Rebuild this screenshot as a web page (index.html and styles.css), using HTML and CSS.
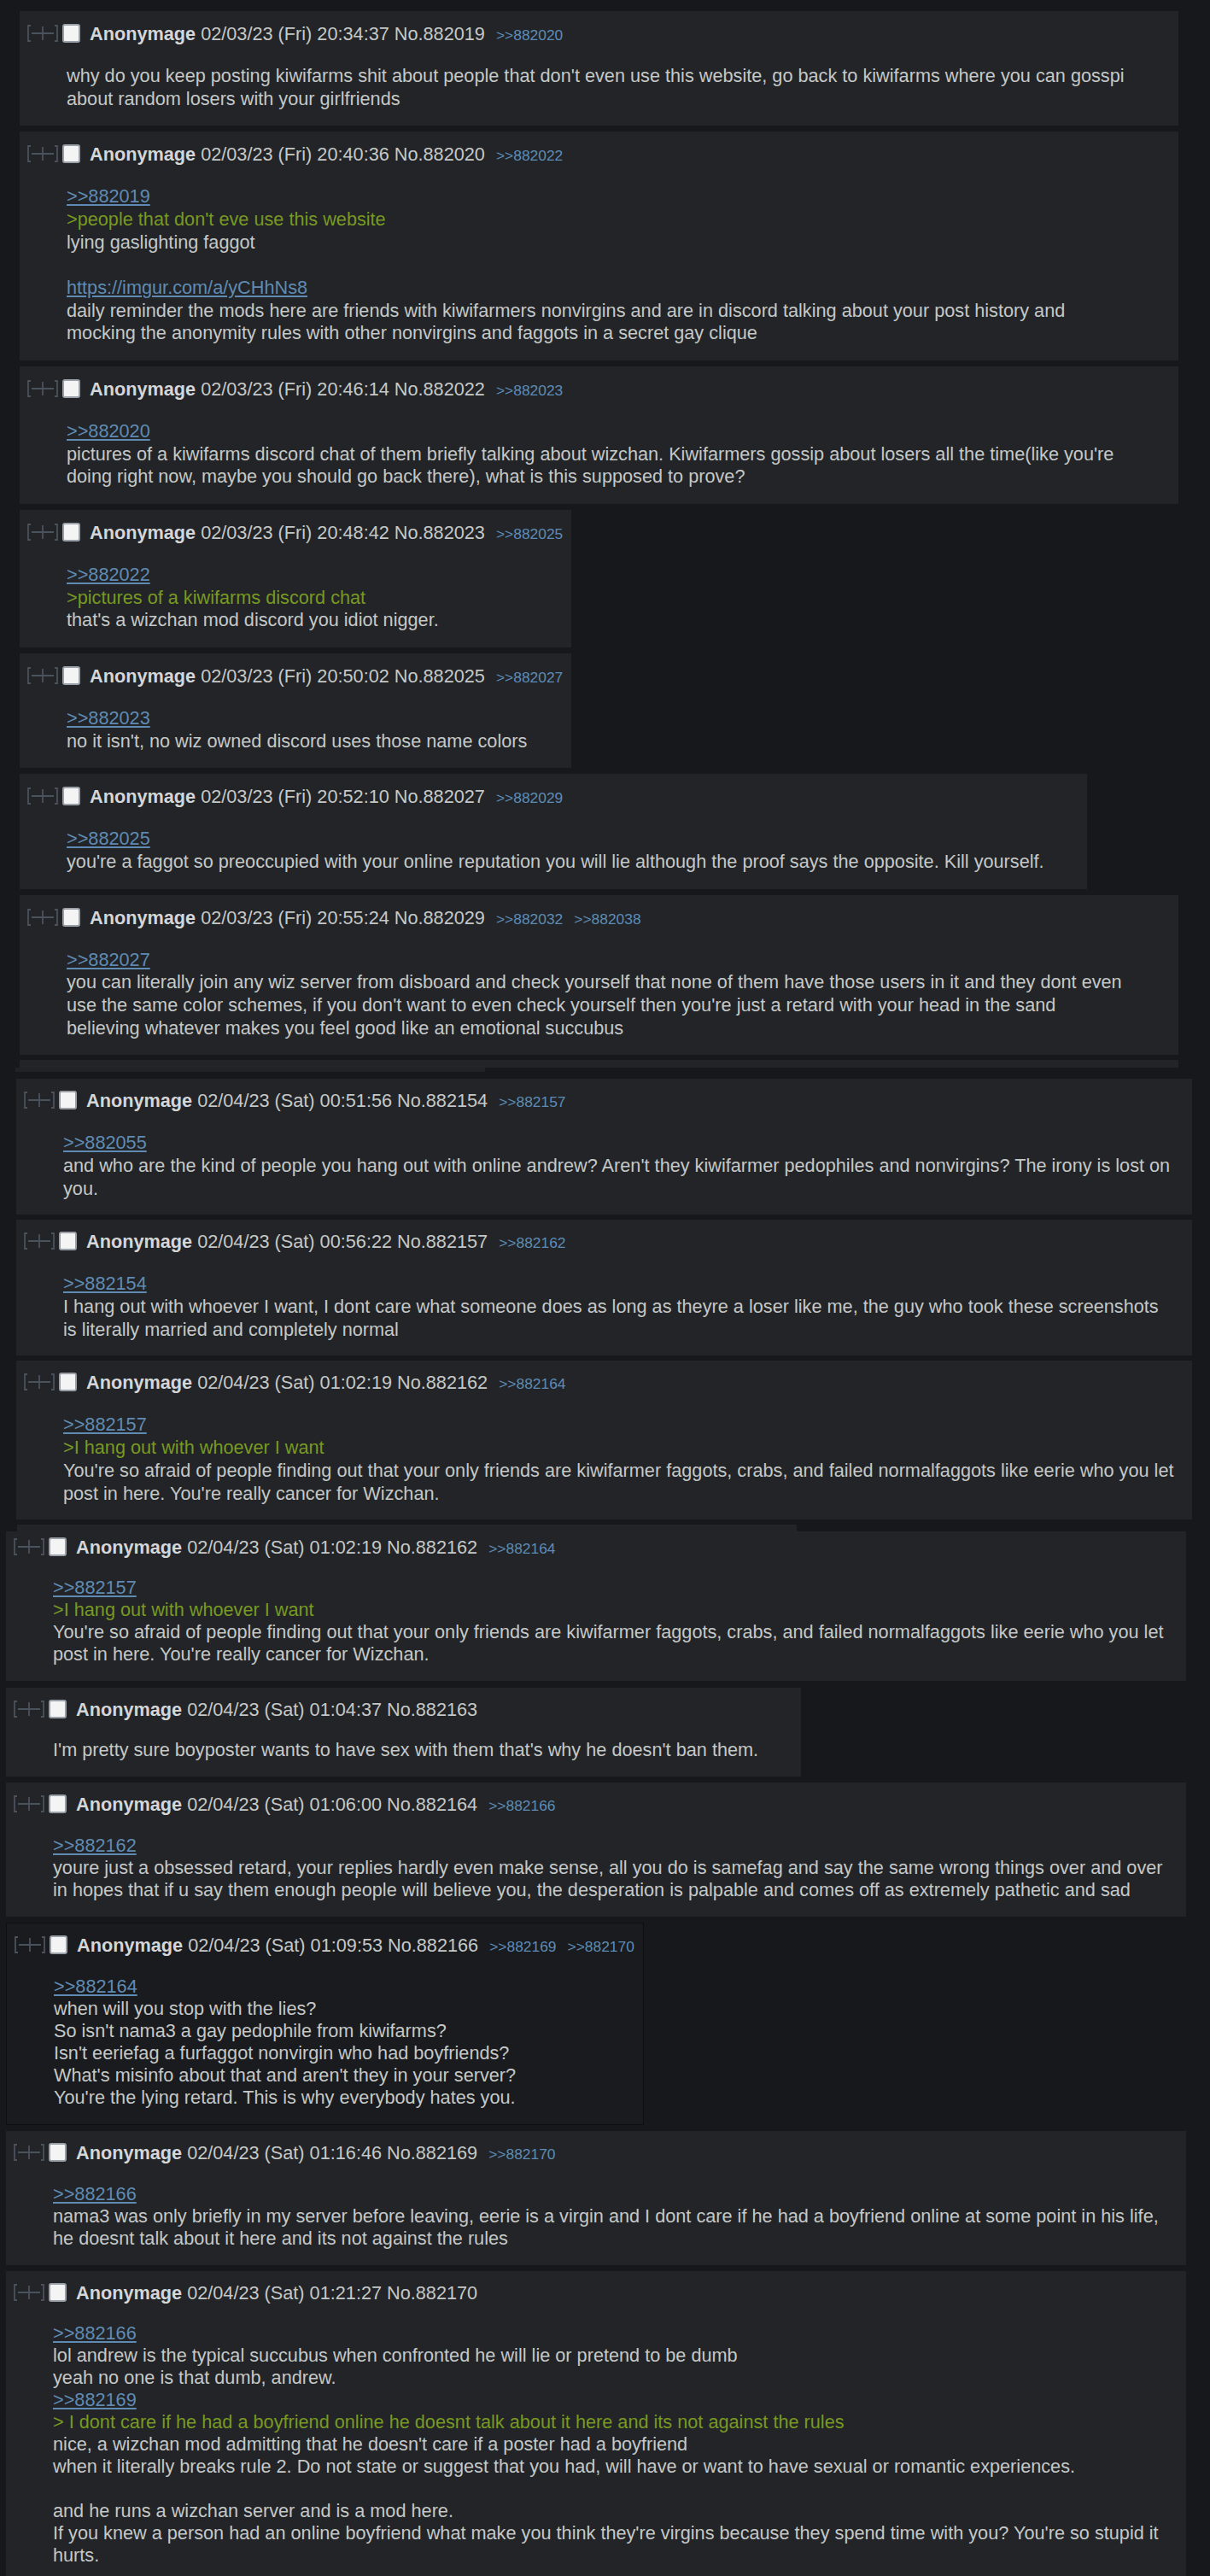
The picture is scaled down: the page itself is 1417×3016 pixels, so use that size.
FILE: index.html
```html
<!DOCTYPE html>
<html lang="en">
<head>
<meta charset="utf-8">
<title>Thread</title>
<link rel="stylesheet" href="styles.css">
</head>
<body>
<div class="page">

<div class="sec sec1">
  <div class="post full">
    <div class="hdr"><svg class="exp" viewBox="0 0 38 22"><path d="M5 2H2V20H5M33 2H36V20H33M6 11H32M19 3V19"/></svg><span class="cb"></span><span class="name">Anonymage</span> 02/03/23 (Fri) 20:34:37 No.882019<span class="backs"><a href="#p882020">&gt;&gt;882020</a></span></div>
    <blockquote class="msg">why do you keep posting kiwifarms shit about people that don't even use this website, go back to kiwifarms where you can gosspi<br>about random losers with your girlfriends</blockquote>
  </div>

  <div class="post full">
    <div class="hdr"><svg class="exp" viewBox="0 0 38 22"><path d="M5 2H2V20H5M33 2H36V20H33M6 11H32M19 3V19"/></svg><span class="cb"></span><span class="name">Anonymage</span> 02/03/23 (Fri) 20:40:36 No.882020<span class="backs"><a href="#p882022">&gt;&gt;882022</a></span></div>
    <blockquote class="msg"><a class="ql" href="#p882019">&gt;&gt;882019</a><br><span class="gt">&gt;people that don't eve use this website</span><br>lying gaslighting faggot<br><br><a class="ql" href="#imgur">https://imgur.com/a/yCHhNs8</a><br>daily reminder the mods here are friends with kiwifarmers nonvirgins and are in discord talking about your post history and<br>mocking the anonymity rules with other nonvirgins and faggots in a secret gay clique</blockquote>
  </div>

  <div class="post full">
    <div class="hdr"><svg class="exp" viewBox="0 0 38 22"><path d="M5 2H2V20H5M33 2H36V20H33M6 11H32M19 3V19"/></svg><span class="cb"></span><span class="name">Anonymage</span> 02/03/23 (Fri) 20:46:14 No.882022<span class="backs"><a href="#p882023">&gt;&gt;882023</a></span></div>
    <blockquote class="msg"><a class="ql" href="#p882020">&gt;&gt;882020</a><br>pictures of a kiwifarms discord chat of them briefly talking about wizchan. Kiwifarmers gossip about losers all the time(like you're<br>doing right now, maybe you should go back there), what is this supposed to prove?</blockquote>
  </div>

  <div class="post">
    <div class="hdr"><svg class="exp" viewBox="0 0 38 22"><path d="M5 2H2V20H5M33 2H36V20H33M6 11H32M19 3V19"/></svg><span class="cb"></span><span class="name">Anonymage</span> 02/03/23 (Fri) 20:48:42 No.882023<span class="backs"><a href="#p882025">&gt;&gt;882025</a></span></div>
    <blockquote class="msg"><a class="ql" href="#p882022">&gt;&gt;882022</a><br><span class="gt">&gt;pictures of a kiwifarms discord chat</span><br>that's a wizchan mod discord you idiot nigger.</blockquote>
  </div>

  <div class="post">
    <div class="hdr"><svg class="exp" viewBox="0 0 38 22"><path d="M5 2H2V20H5M33 2H36V20H33M6 11H32M19 3V19"/></svg><span class="cb"></span><span class="name">Anonymage</span> 02/03/23 (Fri) 20:50:02 No.882025<span class="backs"><a href="#p882027">&gt;&gt;882027</a></span></div>
    <blockquote class="msg"><a class="ql" href="#p882023">&gt;&gt;882023</a><br>no it isn't, no wiz owned discord uses those name colors</blockquote>
  </div>

  <div class="post">
    <div class="hdr"><svg class="exp" viewBox="0 0 38 22"><path d="M5 2H2V20H5M33 2H36V20H33M6 11H32M19 3V19"/></svg><span class="cb"></span><span class="name">Anonymage</span> 02/03/23 (Fri) 20:52:10 No.882027<span class="backs"><a href="#p882029">&gt;&gt;882029</a></span></div>
    <blockquote class="msg"><a class="ql" href="#p882025">&gt;&gt;882025</a><br>you're a faggot so preoccupied with your online reputation you will lie although the proof says the opposite. Kill yourself.</blockquote>
  </div>

  <div class="post full">
    <div class="hdr"><svg class="exp" viewBox="0 0 38 22"><path d="M5 2H2V20H5M33 2H36V20H33M6 11H32M19 3V19"/></svg><span class="cb"></span><span class="name">Anonymage</span> 02/03/23 (Fri) 20:55:24 No.882029<span class="backs"><a href="#p882032">&gt;&gt;882032</a><a href="#p882038">&gt;&gt;882038</a></span></div>
    <blockquote class="msg"><a class="ql" href="#p882027">&gt;&gt;882027</a><br>you can literally join any wiz server from disboard and check yourself that none of them have those users in it and they dont even<br>use the same color schemes, if you don't want to even check yourself then you're just a retard with your head in the sand<br>believing whatever makes you feel good like an emotional succubus</blockquote>
  </div>
</div>

<div class="seam seam1a"></div>
<div class="seam seam1b"></div>

<div class="sec sec2">
  <div class="post full">
    <div class="hdr"><svg class="exp" viewBox="0 0 38 22"><path d="M5 2H2V20H5M33 2H36V20H33M6 11H32M19 3V19"/></svg><span class="cb"></span><span class="name">Anonymage</span> 02/04/23 (Sat) 00:51:56 No.882154<span class="backs"><a href="#p882157">&gt;&gt;882157</a></span></div>
    <blockquote class="msg"><a class="ql" href="#p882055">&gt;&gt;882055</a><br>and who are the kind of people you hang out with online andrew? Aren't they kiwifarmer pedophiles and nonvirgins? The irony is lost on<br>you.</blockquote>
  </div>

  <div class="post full">
    <div class="hdr"><svg class="exp" viewBox="0 0 38 22"><path d="M5 2H2V20H5M33 2H36V20H33M6 11H32M19 3V19"/></svg><span class="cb"></span><span class="name">Anonymage</span> 02/04/23 (Sat) 00:56:22 No.882157<span class="backs"><a href="#p882162">&gt;&gt;882162</a></span></div>
    <blockquote class="msg"><a class="ql" href="#p882154">&gt;&gt;882154</a><br>I hang out with whoever I want, I dont care what someone does as long as theyre a loser like me, the guy who took these screenshots<br>is literally married and completely normal</blockquote>
  </div>

  <div class="post full">
    <div class="hdr"><svg class="exp" viewBox="0 0 38 22"><path d="M5 2H2V20H5M33 2H36V20H33M6 11H32M19 3V19"/></svg><span class="cb"></span><span class="name">Anonymage</span> 02/04/23 (Sat) 01:02:19 No.882162<span class="backs"><a href="#p882164">&gt;&gt;882164</a></span></div>
    <blockquote class="msg"><a class="ql" href="#p882157">&gt;&gt;882157</a><br><span class="gt">&gt;I hang out with whoever I want</span><br>You're so afraid of people finding out that your only friends are kiwifarmer faggots, crabs, and failed normalfaggots like eerie who you let<br>post in here. You're really cancer for Wizchan.</blockquote>
  </div>
</div>

<div class="seam seam2"></div>

<div class="sec sec3">
  <div class="post full cut">
    <div class="hdr"><svg class="exp" viewBox="0 0 38 22"><path d="M5 2H2V20H5M33 2H36V20H33M6 11H32M19 3V19"/></svg><span class="cb"></span><span class="name">Anonymage</span> 02/04/23 (Sat) 01:02:19 No.882162<span class="backs"><a href="#p882164">&gt;&gt;882164</a></span></div>
    <blockquote class="msg"><a class="ql" href="#p882157">&gt;&gt;882157</a><br><span class="gt">&gt;I hang out with whoever I want</span><br>You're so afraid of people finding out that your only friends are kiwifarmer faggots, crabs, and failed normalfaggots like eerie who you let<br>post in here. You're really cancer for Wizchan.</blockquote>
  </div>

  <div class="post">
    <div class="hdr"><svg class="exp" viewBox="0 0 38 22"><path d="M5 2H2V20H5M33 2H36V20H33M6 11H32M19 3V19"/></svg><span class="cb"></span><span class="name">Anonymage</span> 02/04/23 (Sat) 01:04:37 No.882163</div>
    <blockquote class="msg">I'm pretty sure boyposter wants to have sex with them that's why he doesn't ban them.</blockquote>
  </div>

  <div class="post full">
    <div class="hdr"><svg class="exp" viewBox="0 0 38 22"><path d="M5 2H2V20H5M33 2H36V20H33M6 11H32M19 3V19"/></svg><span class="cb"></span><span class="name">Anonymage</span> 02/04/23 (Sat) 01:06:00 No.882164<span class="backs"><a href="#p882166">&gt;&gt;882166</a></span></div>
    <blockquote class="msg"><a class="ql" href="#p882162">&gt;&gt;882162</a><br>youre just a obsessed retard, your replies hardly even make sense, all you do is samefag and say the same wrong things over and over<br>in hopes that if u say them enough people will believe you, the desperation is palpable and comes off as extremely pathetic and sad</blockquote>
  </div>

  <div class="post hl">
    <div class="hdr"><svg class="exp" viewBox="0 0 38 22"><path d="M5 2H2V20H5M33 2H36V20H33M6 11H32M19 3V19"/></svg><span class="cb"></span><span class="name">Anonymage</span> 02/04/23 (Sat) 01:09:53 No.882166<span class="backs"><a href="#p882169">&gt;&gt;882169</a><a href="#p882170">&gt;&gt;882170</a></span></div>
    <blockquote class="msg"><a class="ql" href="#p882164">&gt;&gt;882164</a><br>when will you stop with the lies?<br>So isn't nama3 a gay pedophile from kiwifarms?<br>Isn't eeriefag a furfaggot nonvirgin who had boyfriends?<br>What's misinfo about that and aren't they in your server?<br>You're the lying retard. This is why everybody hates you.</blockquote>
  </div>

  <div class="post full">
    <div class="hdr"><svg class="exp" viewBox="0 0 38 22"><path d="M5 2H2V20H5M33 2H36V20H33M6 11H32M19 3V19"/></svg><span class="cb"></span><span class="name">Anonymage</span> 02/04/23 (Sat) 01:16:46 No.882169<span class="backs"><a href="#p882170">&gt;&gt;882170</a></span></div>
    <blockquote class="msg"><a class="ql" href="#p882166">&gt;&gt;882166</a><br>nama3 was only briefly in my server before leaving, eerie is a virgin and I dont care if he had a boyfriend online at some point in his life,<br>he doesnt talk about it here and its not against the rules</blockquote>
  </div>

  <div class="post full">
    <div class="hdr"><svg class="exp" viewBox="0 0 38 22"><path d="M5 2H2V20H5M33 2H36V20H33M6 11H32M19 3V19"/></svg><span class="cb"></span><span class="name">Anonymage</span> 02/04/23 (Sat) 01:21:27 No.882170</div>
    <blockquote class="msg"><a class="ql" href="#p882166">&gt;&gt;882166</a><br>lol andrew is the typical succubus when confronted he will lie or pretend to be dumb<br>yeah no one is that dumb, andrew.<br><a class="ql" href="#p882169">&gt;&gt;882169</a><br><span class="gt">&gt; I dont care if he had a boyfriend online he doesnt talk about it here and its not against the rules</span><br>nice, a wizchan mod admitting that he doesn't care if a poster had a boyfriend<br>when it literally breaks rule 2. Do not state or suggest that you had, will have or want to have sexual or romantic experiences.<br><br>and he runs a wizchan server and is a mod here.<br>If you knew a person had an online boyfriend what make you think they're virgins because they spend time with you? You're so stupid it<br>hurts.</blockquote>
  </div>
</div>

</div>
</body>
</html>
```

FILE: styles.css
```css
html, body {
  margin: 0;
  padding: 0;
  background: #16181b;
}

.page {
  padding-top: 13px;
  font-family: "Liberation Sans", Arial, sans-serif;
  font-size: 21.7px;
  color: #c5c8c6;
}

.sec1 { padding-left: 23px; }
.sec2 { padding-left: 19px; }
.sec3 { padding-left: 7px; }

.post {
  box-sizing: border-box;
  width: fit-content;
  background: #222428;
  padding: 14px 10px 18px 8px;
  margin-bottom: 7px;
}

.sec1 .post.full { width: 1357px; }
.sec2 .post { padding-top: 13px; padding-bottom: 17px; margin-bottom: 6px; }
.sec2 .post.full { width: 1377px; }
.sec3 .post { padding-top: 13px; padding-bottom: 18px; margin-bottom: 7px; }
.sec3 .post.full { width: 1382px; }

.hdr {
  line-height: 26.67px;
  white-space: nowrap;
}

.exp {
  display: inline-block;
  width: 38px;
  height: 22px;
  vertical-align: -3px;
  margin-right: 4px;
}

.exp path {
  fill: none;
  stroke: #4a525c;
  stroke-width: 1.8;
}

.cb {
  display: inline-block;
  box-sizing: border-box;
  width: 21px;
  height: 22px;
  vertical-align: -3px;
  background: #f4f4f4;
  border: 2px solid #9aa0a8;
  border-radius: 3px;
  margin-right: 11px;
}

.name {
  font-weight: bold;
  color: #d4d6d8;
}

.backs {
  font-size: 17.4px;
}

.backs a {
  color: #5d8cb6;
  text-decoration: none;
  margin-left: 13px;
}

.msg {
  margin: 21.33px 40px 0 47px;
  line-height: 26.67px;
  white-space: nowrap;
}

.sec3 .hdr { line-height: 26px; }
.sec3 .msg { line-height: 26px; margin-top: 21px; }

.ql {
  color: #5f8bb3;
  text-decoration: underline;
}

.gt {
  color: #789922;
}

.sec3 .post.cut { padding-top: 6px; margin-bottom: 8px; }
.sec3 .post.cut .msg { margin-top: 20px; }

.sec3 .post.hl {
  background: #1a1b1e;
  border: 1px solid #0d0e10;
}

.seam { background: #222428; }
.seam1a { margin: -1px 0 0 23px; width: 1357px; height: 9px; }
.seam1b { margin: 0 0 8px 18px; width: 550px; height: 5px; background: #202226; }
.seam2 { margin: 4px 0 0 20px; width: 913px; height: 8px; }
```
